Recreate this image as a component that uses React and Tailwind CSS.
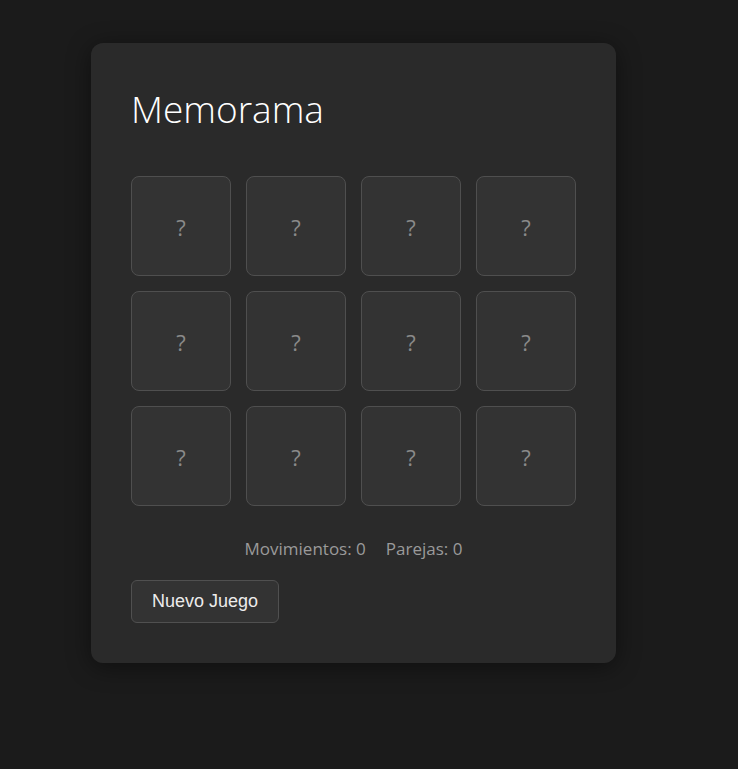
import React, { useState } from 'react';

const CARDS = Array.from({ length: 12 }, (_, i) => i);

export default function App() {
    const [moves] = useState(0);
    const [pairs] = useState(0);

    return (
        <div className="min-h-screen bg-[#1b1b1b] pl-[91px] pt-[43px]">
            <div className="w-[525px] rounded-xl bg-[#2a2a2a] p-10 shadow-[0_4px_24px_rgba(0,0,0,0.45)]">
                <h1 className="font-['Open_Sans',sans-serif] text-[37px] font-light leading-[48px] text-white mt-[2px] mb-[43px]">
                    Memorama
                </h1>

                {/* Board */}
                <div className="grid grid-cols-[repeat(4,100px)] gap-[15px]">
                    {CARDS.map(c => (
                        <div
                            key={c}
                            className="flex h-[100px] w-[100px] items-center justify-center rounded-lg border border-[#4f4f4f] bg-[#333333] pt-[3px] font-['Open_Sans',sans-serif] text-[22px] text-[#8a8a8a]"
                        >
                            ?
                        </div>
                    ))}
                </div>

                <div className="mt-[31px] flex justify-center gap-5 font-['Open_Sans',sans-serif] text-[17px] leading-6 text-[#9a9a9a]">
                    <span>Movimientos: {moves}</span>
                    <span>Parejas: {pairs}</span>
                </div>

                <button className="mt-[19px] h-[43px] rounded-md border border-[#505050] bg-[#333333] px-5 font-['Liberation_Sans',Arial,sans-serif] text-[18px] text-[#ececec]">
                    Nuevo Juego
                </button>
            </div>
        </div>
    );
}
